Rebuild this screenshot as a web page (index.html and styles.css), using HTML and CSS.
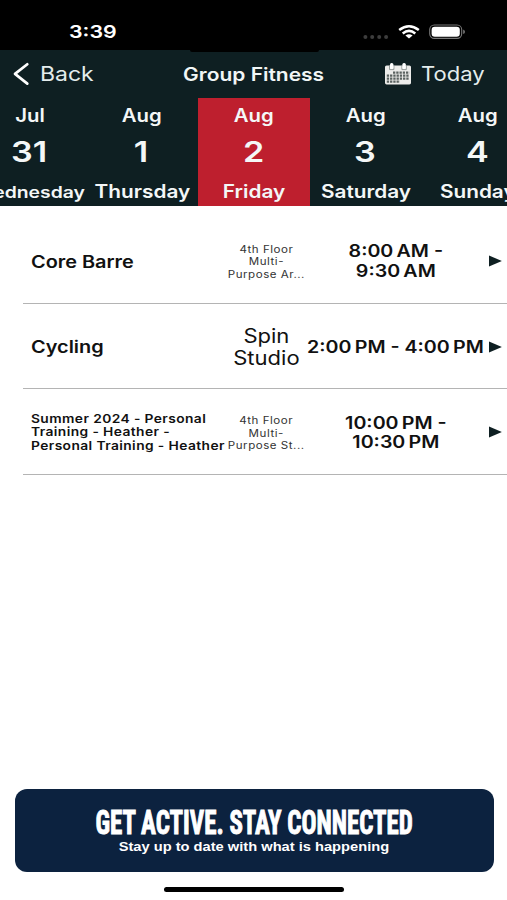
FILE: index.html
```
<!DOCTYPE html>
<html lang="en">
<head>
<meta charset="utf-8">
<title>Group Fitness</title>
<link rel="stylesheet" href="styles.css">
</head>
<body>
<div class="screen">
  <div class="status">
    <span class="clock">3:39</span>
    <div class="status-icons">
      <svg class="dots" width="26" height="14" viewBox="0 0 26 14" fill="#3d3d3d"><circle cx="2.4" cy="7" r="2"/><circle cx="9.2" cy="7" r="2"/><circle cx="16.2" cy="7" r="2"/><circle cx="23.1" cy="7" r="2"/></svg>
      <svg class="wifi" width="22" height="14" viewBox="0 0 22 14" fill="none" stroke="#fff" stroke-width="2.5"><path d="M1.2 5.1Q11 -2.5 20.8 5.1"/><path d="M4.7 8.5Q11 3.3 17.3 8.5"/><path d="M11 13.6L7.4 10.6Q11 7.8 14.6 10.6Z" fill="#fff" stroke="none"/></svg>
      <svg class="battery" width="37" height="16" viewBox="0 0 37 16"><rect x=".7" y="1" width="32" height="13.4" rx="4.6" fill="none" stroke="#777" stroke-width="1.1"/><rect x="2.6" y="2.7" width="28.2" height="10" rx="3.2" fill="#fff"/><path d="M34.2 5.4Q36 6 36 7.7T34.2 10Z" fill="#777"/></svg>
    </div>
  </div>

  <div class="navbar">
    <div class="nav-back">
      <svg width="18" height="24" viewBox="0 0 18 24" fill="none" stroke="#fff" stroke-width="2.7" stroke-linecap="round" stroke-linejoin="round"><path d="M14.3 2.3L2 11.9L14.3 21.6"/></svg>
      <span class="back-label">Back</span>
    </div>
    <div class="nav-title"><span>Group Fitness</span></div>
    <div class="nav-today">
      <svg width="26" height="22" viewBox="0 0 26 22">
        <rect x="0" y="2.4" width="26" height="19" rx="1.6" fill="#ececea"/>
        <path d="M8 9.7H24.4M1.8 12.7H24.4M1.8 15.7H24.4M1.8 18.7H15" stroke="#59615f" stroke-width="2.3" stroke-dasharray="2.3 .95"/>
        <path d="M4.5 3V6.6H8.9V3M16.9 3V6.6H21.3V3" fill="none" stroke="#7f8887" stroke-width=".8"/>
        <rect x="5" y="0" width="3.4" height="6" rx="1.5" fill="#fff"/><rect x="17.4" y="0" width="3.4" height="6" rx="1.5" fill="#fff"/>
      </svg>
      <span class="today-label">Today</span>
    </div>
  </div>

  <div class="days">
    <div class="day"><span class="month">Jul</span><span class="date">31</span><span class="weekday long">Wednesday</span></div>
    <div class="day"><span class="month">Aug</span><span class="date">1</span><span class="weekday">Thursday</span></div>
    <div class="day selected"><span class="month">Aug</span><span class="date">2</span><span class="weekday">Friday</span></div>
    <div class="day"><span class="month">Aug</span><span class="date">3</span><span class="weekday">Saturday</span></div>
    <div class="day"><span class="month">Aug</span><span class="date">4</span><span class="weekday">Sunday</span></div>
  </div>

  <div class="classes">
    <div class="row">
      <div class="name">Core Barre</div>
      <div class="place small">4th Floor<br>Multi-<br>Purpose Ar...</div>
      <div class="time">8:00&#8239;AM -<br>9:30&#8239;AM</div>
      <svg class="arrow" width="13" height="12" viewBox="0 0 13 12"><path d="M0 .5L12.9 6L0 11.5Z"/></svg>
    </div>
    <div class="row">
      <div class="name">Cycling</div>
      <div class="place">Spin<br>Studio</div>
      <div class="time">2:00&#8239;PM - 4:00&#8239;PM</div>
      <svg class="arrow" width="13" height="12" viewBox="0 0 13 12"><path d="M0 .5L12.9 6L0 11.5Z"/></svg>
    </div>
    <div class="row">
      <div class="name small">Summer 2024 - Personal<br>Training - Heather -<br>Personal Training - Heather</div>
      <div class="place small">4th Floor<br>Multi-<br>Purpose St...</div>
      <div class="time">10:00&#8239;PM -<br>10:30&#8239;PM</div>
      <svg class="arrow" width="13" height="12" viewBox="0 0 13 12"><path d="M0 .5L12.9 6L0 11.5Z"/></svg>
    </div>
  </div>

  <div class="banner">
    <span class="banner-title">GET ACTIVE. STAY CONNECTED</span>
    <span class="banner-text">Stay up to date with what is happening</span>
  </div>
  <div class="home-bar"></div>
</div>
</body>
</html>
```
FILE: styles.css
```
* { box-sizing: border-box; }

body {
  margin: 0;
  background: #fff;
  font-family: Inter, "Liberation Sans", sans-serif;
}

.screen {
  width: 507px;
  height: 900px;
  overflow: hidden;
  display: flex;
  flex-direction: column;
  align-items: stretch;
}

.clock, .back-label, .nav-title span, .today-label,
.month, .date, .weekday, .name, .place, .time,
.banner-title, .banner-text {
  display: block;
  width: max-content;
  white-space: nowrap;
}

/* Status bar */
.status {
  flex: none;
  height: 50px;
  background: #000;
  color: #fff;
  display: flex;
  justify-content: space-between;
  padding: 22px 41px 0 69px;
  position: relative;
}
.status::after {
  content: "";
  position: absolute;
  left: 190px;
  top: 50px;
  width: 129px;
  height: 1.5px;
  border-radius: 0 0 4px 4px;
  background: #000;
}
.clock {
  font-size: 17.5px;
  font-weight: 600;
  line-height: 20px;
  transform: scaleX(1.22);
  transform-origin: left;
}
.status-icons { display: flex; height: 20px; }
.dots { margin: 7.5px 8.5px 0 0; }
.wifi { margin: 2.5px 9.5px 0 0; }
.battery { margin-top: 2px; }

/* Navigation bar */
.navbar {
  flex: none;
  height: 48px;
  background: #0e1f22;
  color: #e4eded;
  display: grid;
  grid-template-columns: 1fr auto 1fr;
  align-items: center;
}
.nav-back { display: flex; align-items: center; padding-left: 12.5px; }
.back-label {
  margin-left: 9.2px;
  font-size: 20px;
  line-height: 24px;
  transform: scaleX(1.15);
  transform-origin: left;
}
.nav-title span {
  font-size: 18px;
  font-weight: 600;
  line-height: 24px;
  padding: 1px 0 0 1px;
  transform: scaleX(1.165);
  color: #f1f6f6;
}
.nav-today { display: flex; align-items: center; justify-content: flex-end; padding-right: 28px; }
.nav-today svg { margin-right: 10px; }
.today-label {
  font-size: 20px;
  line-height: 24px;
  transform: scaleX(1.1);
  transform-origin: left;
}

/* Day strip */
.days {
  flex: none;
  height: 108px;
  margin-left: -26px;
  display: grid;
  grid-template-columns: repeat(5, 112px);
  background: #0e1f22;
  color: #f4f7f7;
  font-weight: 600;
}
.day {
  display: flex;
  flex-direction: column;
  align-items: center;
  padding-top: 8px;
}
.selected { background: #be1f2e; }
.month { font-size: 18px; line-height: 20px; transform: scaleX(1.13); }
.date { margin-top: 8px; padding-right: 1px; font-size: 28.5px; line-height: 36px; transform: scaleX(1.2); }
.weekday { margin-top: 12px; font-size: 18px; line-height: 20px; transform: scaleX(1.155); }
.weekday.long { font-size: 16px; transform: scaleX(1.21); }

/* Class list */
.classes {
  flex: none;
  margin: 12px 0 0 23px;
  color: #111;
}
.row {
  height: 85.6px;
  display: grid;
  grid-template-columns: 196px 79px 181px 13px;
  align-items: center;
  padding: 1.5px 0 0 8px;
  border-bottom: 1px solid #b4b4b4;
}
.name {
  font-size: 17px;
  font-weight: 600;
  line-height: 20px;
  padding-top: 1px;
  transform: scaleX(1.17);
  transform-origin: left;
}
.name.small {
  font-size: 11.8px;
  line-height: 13.7px;
  letter-spacing: .35px;
  padding-top: 2px;
  transform: scaleX(1.168);
}
.place {
  justify-self: center;
  text-align: center;
  font-size: 19.5px;
  line-height: 22px;
  transform: scaleX(1.13);
}
.place.small {
  font-size: 10px;
  line-height: 12.4px;
  letter-spacing: .45px;
  padding-top: 1px;
  transform: scaleX(1.155);
  color: #333;
}
.time {
  justify-self: center;
  text-align: center;
  font-size: 17px;
  font-weight: 600;
  line-height: 19.7px;
  padding: 2px 1px 0 0;
  transform: scaleX(1.155);
}
.arrow { margin-left: 2.4px; fill: #0e1f22; }

/* Promo banner */
.banner {
  flex: none;
  margin: auto 13.5px 0 14.5px;
  height: 83.5px;
  border-radius: 12px;
  background: #0c223f;
  color: #fff;
  display: flex;
  flex-direction: column;
  align-items: center;
  padding-top: 18.5px;
}
.banner-title {
  font-family: "Roboto Condensed", Roboto, sans-serif;
  font-size: 33px;
  font-weight: 700;
  line-height: 32px;
  -webkit-text-stroke: 1px #fff;
  transform: scaleX(.755);
}
.banner-text {
  font-family: "Liberation Sans", Arial, sans-serif;
  font-size: 13px;
  font-weight: 700;
  line-height: 14px;
  margin-top: 1px;
  transform: scaleX(1.128);
}

.home-bar {
  flex: none;
  width: 180px;
  height: 5px;
  margin: 14.5px 0 8.5px 164px;
  border-radius: 3px;
  background: #000;
}
```
